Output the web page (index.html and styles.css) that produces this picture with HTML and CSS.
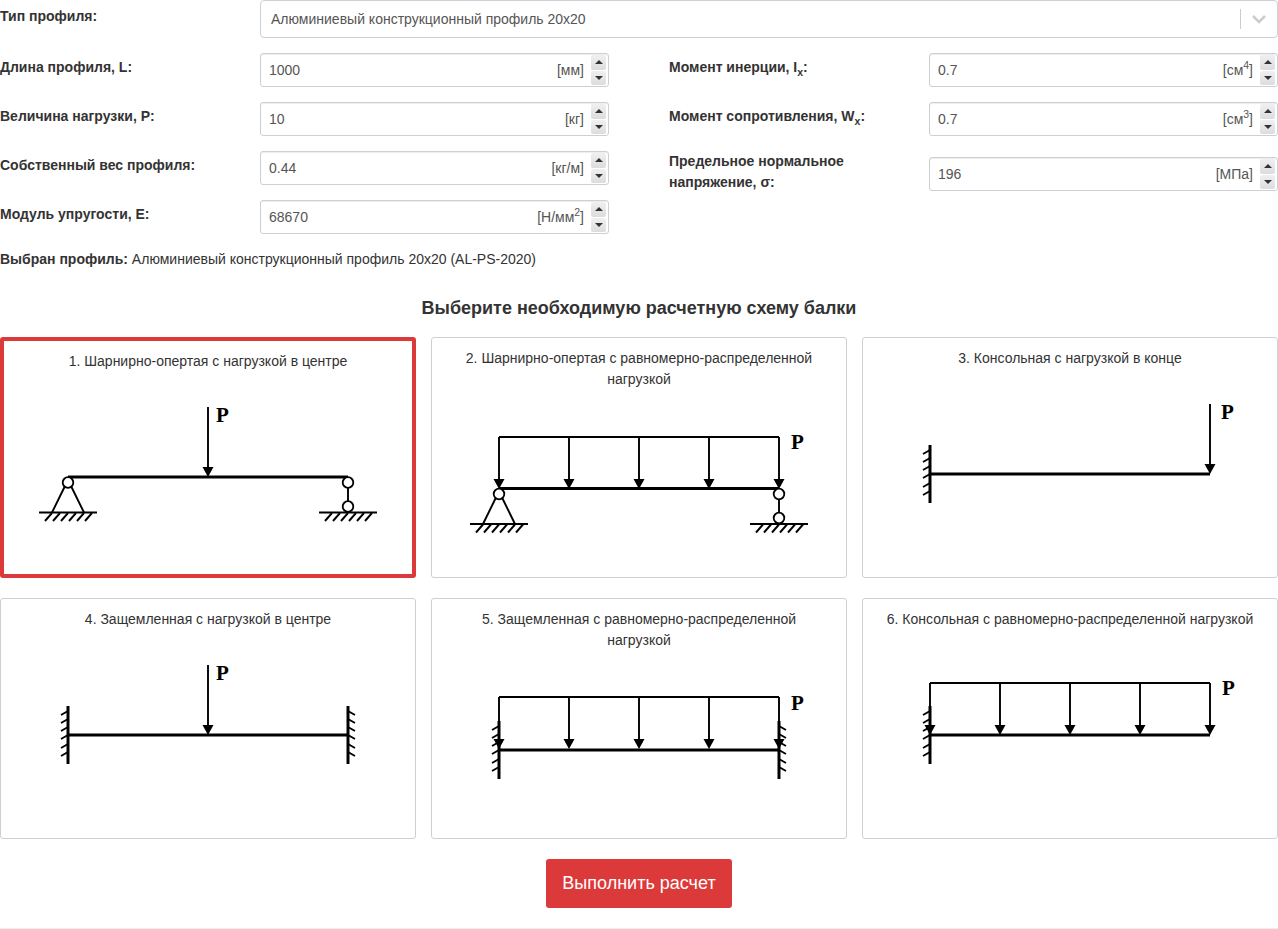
FILE: index.html
```html
<!DOCTYPE html>
<html lang="en">
<head>
    <meta charset="UTF-8">
    <meta name="viewport" content="width=device-width, initial-scale=1.0">
    <title>Расчет прогиба профиля</title>
    <link rel="stylesheet" href="styles.css">
</head>
<body>
    <svg class="defs" aria-hidden="true">
        <defs>
            <polygon id="head" points="-5.5,-10 5.5,-10 0,0"></polygon>
            <g id="wall">
                <line class="thick" x1="0" y1="-29" x2="0" y2="29"></line>
                <path class="thin" d="M0-24l-7 4M0-16l-7 4M0-8l-7 4M0 0l-7 4M0 9l-7 4M0 17l-7 4"></path>
            </g>
            <g id="ground">
                <line class="thin" x1="-29" y1="35.5" x2="29" y2="35.5"></line>
                <path class="thin" d="M-16 36l-7 8M-8 36l-7 8M0 36l-7 8M8 36l-7 8M16 36l-7 8M24 36l-7 8"></path>
            </g>
            <g id="pin">
                <use href="#ground"></use>
                <path class="thin" d="M-3 9L-16 35.5M3 9L16 35.5"></path>
                <circle class="joint" cx="0" cy="5.5" r="5.3"></circle>
            </g>
            <g id="roller">
                <use href="#ground"></use>
                <line class="thin" x1="0" y1="6" x2="0" y2="28"></line>
                <circle class="joint" cx="0" cy="5.5" r="5.3"></circle>
                <circle class="joint" cx="0" cy="29.5" r="5.3"></circle>
            </g>
            <g id="load">
                <path class="thin" d="M35 0H315M35 0V48M105 0V48M175 0V48M245 0V48M315 0V48"></path>
                <use href="#head" x="35" y="52"></use>
                <use href="#head" x="105" y="52"></use>
                <use href="#head" x="175" y="52"></use>
                <use href="#head" x="245" y="52"></use>
                <use href="#head" x="315" y="52"></use>
            </g>
        </defs>
    </svg>

    <div class="row-select">
        <div class="field-label">Тип профиля:</div>
        <div class="select-box">
            <span class="select-value">Алюминиевый конструкционный профиль 20х20</span>
            <span class="select-sep"></span>
            <svg class="select-arrow" width="20" height="20" viewBox="0 0 20 20"><path d="M4 7l6 6 6-6"></path></svg>
        </div>
    </div>

    <div class="form-cols">
        <div class="form-col">
            <div class="field">
                <div class="field-label">Длина профиля, L:</div>
                <div class="num-box">
                    <input type="number" value="1000">
                    <span class="unit">[мм]</span>
                    <div class="spin"><span class="up"></span><span class="down"></span></div>
                </div>
            </div>
            <div class="field">
                <div class="field-label">Величина нагрузки, P:</div>
                <div class="num-box">
                    <input type="number" value="10">
                    <span class="unit">[кг]</span>
                    <div class="spin"><span class="up"></span><span class="down"></span></div>
                </div>
            </div>
            <div class="field">
                <div class="field-label">Собственный вес профиля:</div>
                <div class="num-box">
                    <input type="number" value="0.44">
                    <span class="unit">[кг/м]</span>
                    <div class="spin"><span class="up"></span><span class="down"></span></div>
                </div>
            </div>
            <div class="field">
                <div class="field-label">Модуль упругости, E:</div>
                <div class="num-box">
                    <input type="number" value="68670">
                    <span class="unit">[Н/мм<sup>2</sup>]</span>
                    <div class="spin"><span class="up"></span><span class="down"></span></div>
                </div>
            </div>
        </div>
        <div class="form-col">
            <div class="field">
                <div class="field-label">Момент инерции, I<sub>x</sub>:</div>
                <div class="num-box">
                    <input type="number" value="0.7">
                    <span class="unit">[см<sup>4</sup>]</span>
                    <div class="spin"><span class="up"></span><span class="down"></span></div>
                </div>
            </div>
            <div class="field">
                <div class="field-label">Момент сопротивления, W<sub>x</sub>:</div>
                <div class="num-box">
                    <input type="number" value="0.7">
                    <span class="unit">[см<sup>3</sup>]</span>
                    <div class="spin"><span class="up"></span><span class="down"></span></div>
                </div>
            </div>
            <div class="field">
                <div class="field-label two-lines">Предельное нормальное напряжение, σ:</div>
                <div class="num-box lower">
                    <input type="number" value="196">
                    <span class="unit">[МПа]</span>
                    <div class="spin"><span class="up"></span><span class="down"></span></div>
                </div>
            </div>
        </div>
    </div>

    <p class="chosen"><b>Выбран профиль:</b> Алюминиевый конструкционный профиль 20х20 (AL-PS-2020)</p>

    <h2 class="scheme-title">Выберите необходимую расчетную схему балки</h2>

    <div class="cards">
        <div class="card active">
            <div class="card-title">1. Шарнирно-опертая с нагрузкой в центре</div>
            <svg class="scheme" width="350" height="140" viewBox="0 0 350 140">
                <line class="thin" x1="175" y1="35" x2="175" y2="100"></line>
                <use href="#head" x="175" y="105"></use>
                <line class="thick" x1="35" y1="105" x2="315" y2="105"></line>
                <use href="#pin" x="35" y="105"></use>
                <use href="#roller" x="315" y="105"></use>
                <text x="183" y="50">P</text>
            </svg>
        </div>
        <div class="card">
            <div class="card-title">2. Шарнирно-опертая с равномерно-распределенной нагрузкой</div>
            <svg class="scheme" width="350" height="140" viewBox="0 0 350 140">
                <use href="#load" y="47"></use>
                <line class="thick" x1="35" y1="98.5" x2="315" y2="98.5"></line>
                <use href="#pin" x="35" y="98.5"></use>
                <use href="#roller" x="315" y="98.5"></use>
                <text x="327" y="59">P</text>
            </svg>
        </div>
        <div class="card">
            <div class="card-title">3. Консольная с нагрузкой в конце</div>
            <svg class="scheme" width="350" height="140" viewBox="0 0 350 140">
                <line class="thin" x1="315" y1="35" x2="315" y2="100"></line>
                <use href="#head" x="315" y="105"></use>
                <line class="thick" x1="35" y1="105" x2="315" y2="105"></line>
                <use href="#wall" x="35" y="105"></use>
                <text x="326" y="50">P</text>
            </svg>
        </div>
        <div class="card">
            <div class="card-title">4. Защемленная с нагрузкой в центре</div>
            <svg class="scheme" width="350" height="140" viewBox="0 0 350 140">
                <line class="thin" x1="175" y1="35" x2="175" y2="100"></line>
                <use href="#head" x="175" y="105"></use>
                <line class="thick" x1="35" y1="105" x2="315" y2="105"></line>
                <use href="#wall" x="35" y="105"></use>
                <use href="#wall" transform="translate(315 105) scale(-1 1)"></use>
                <text x="183" y="50">P</text>
            </svg>
        </div>
        <div class="card">
            <div class="card-title">5. Защемленная с равномерно-распределенной нагрузкой</div>
            <svg class="scheme" width="350" height="140" viewBox="0 0 350 140">
                <use href="#load" y="46"></use>
                <line class="thick" x1="35" y1="99" x2="315" y2="99"></line>
                <use href="#wall" x="35" y="99"></use>
                <use href="#wall" transform="translate(315 99) scale(-1 1)"></use>
                <text x="327" y="59">P</text>
            </svg>
        </div>
        <div class="card">
            <div class="card-title">6. Консольная с равномерно-распределенной нагрузкой</div>
            <svg class="scheme" width="350" height="140" viewBox="0 0 350 140">
                <use href="#load" y="53"></use>
                <line class="thick" x1="35" y1="105" x2="315" y2="105"></line>
                <use href="#wall" x="35" y="105"></use>
                <text x="327" y="65">P</text>
            </svg>
        </div>
    </div>

    <div class="actions">
        <button class="btn-calc">Выполнить расчет</button>
    </div>
    <hr class="bottom-line">
</body>
</html>
```

FILE: styles.css
```css
body {
    margin: 0;
    font-family: "Liberation Sans", Arial, sans-serif;
    font-size: 14px;
    line-height: 21px;
    color: #333;
    background: #fff;
}
.defs {
    position: absolute;
    width: 0;
    height: 0;
}
.row-select {
    display: flex;
    margin-bottom: 15px;
}
.row-select .field-label {
    padding-top: 6px;
}
.field-label {
    width: 260px;
    flex-shrink: 0;
    padding-top: 4px;
    font-weight: bold;
}
.field-label sub {
    font-size: 75%;
    line-height: 0;
}
.two-lines {
    padding-top: 0;
    width: 230px;
    margin-right: 30px;
}
.select-box {
    flex: 1;
    height: 38px;
    box-sizing: border-box;
    display: flex;
    align-items: center;
    border: 1px solid #ccd0d6;
    border-radius: 4px;
    padding-left: 10px;
    color: #555;
}
.select-value {
    flex: 1;
}
.select-sep {
    width: 1px;
    height: 20px;
    background: #ccc;
}
.select-arrow {
    margin: 0 8px;
}
.select-arrow path {
    fill: none;
    stroke: #ccc;
    stroke-width: 2.5;
}
.form-cols {
    display: grid;
    grid-template-columns: 609px 609px;
    column-gap: 60px;
}
.form-col {
    display: flex;
    flex-direction: column;
    gap: 15px;
}
.field {
    display: flex;
    align-items: flex-start;
}
.num-box {
    flex: 1;
    height: 34px;
    box-sizing: border-box;
    display: flex;
    align-items: center;
    border: 1px solid #ccd0d6;
    border-radius: 3px;
    box-shadow: inset 0 1px 1px rgba(0, 0, 0, 0.075);
    color: #555;
}
.lower {
    margin-top: 6px;
}
.num-box input {
    flex: 1;
    min-width: 0;
    border: none;
    outline: none;
    background: transparent;
    padding: 0 0 0 8px;
    font: inherit;
    color: #555;
    appearance: textfield;
}
.num-box input::-webkit-inner-spin-button {
    appearance: none;
}
.unit {
    margin-right: 7px;
}
.unit sup {
    font-size: 75%;
    line-height: 0;
}
.spin {
    width: 15px;
    height: 30px;
    margin-right: 2px;
    display: flex;
    flex-direction: column;
    gap: 1px;
}
.spin span {
    flex: 1;
    background: linear-gradient(#f0f0f0, #dcdcdc);
    border-radius: 2px;
    display: flex;
    align-items: center;
    justify-content: center;
}
.spin .up::after {
    content: "";
    border: 4px solid transparent;
    border-top: 0;
    border-bottom: 4px solid #333;
}
.spin .down::after {
    content: "";
    border: 4px solid transparent;
    border-bottom: 0;
    border-top: 4px solid #333;
}
.chosen {
    margin: 15px 0 0;
}
.scheme-title {
    margin: 27px 0 18px;
    font-size: 18px;
    line-height: 22px;
    text-align: center;
}
.cards {
    display: grid;
    grid-template-columns: repeat(3, 416px);
    grid-auto-rows: 241px;
    column-gap: 15px;
    row-gap: 20px;
}
.card {
    box-sizing: border-box;
    border: 1px solid #ccd0d6;
    border-radius: 3px;
    padding: 10px 20px 0;
    text-align: center;
}
.card.active {
    border: 4px solid #dc3a3a;
    padding: 10px 17px 0;
}
.scheme {
    display: block;
    margin: 0 auto;
    overflow: visible;
}
.scheme text {
    font-family: "Liberation Serif", "Times New Roman", serif;
    font-size: 21px;
    font-weight: bold;
    fill: #000;
}
.thick {
    stroke: #000;
    stroke-width: 3;
}
.thin {
    fill: none;
    stroke: #000;
    stroke-width: 1.9;
}
.joint {
    fill: #fff;
    stroke: #000;
    stroke-width: 1.8;
}
.actions {
    margin-top: 20px;
    text-align: center;
}
.btn-calc {
    width: 186px;
    height: 49px;
    border: none;
    border-radius: 3px;
    background: #dc3a3a;
    color: #fff;
    font-family: inherit;
    font-size: 18px;
}
.bottom-line {
    margin: 20px 0 0;
    border: none;
    border-top: 1px solid #eee;
}
```
